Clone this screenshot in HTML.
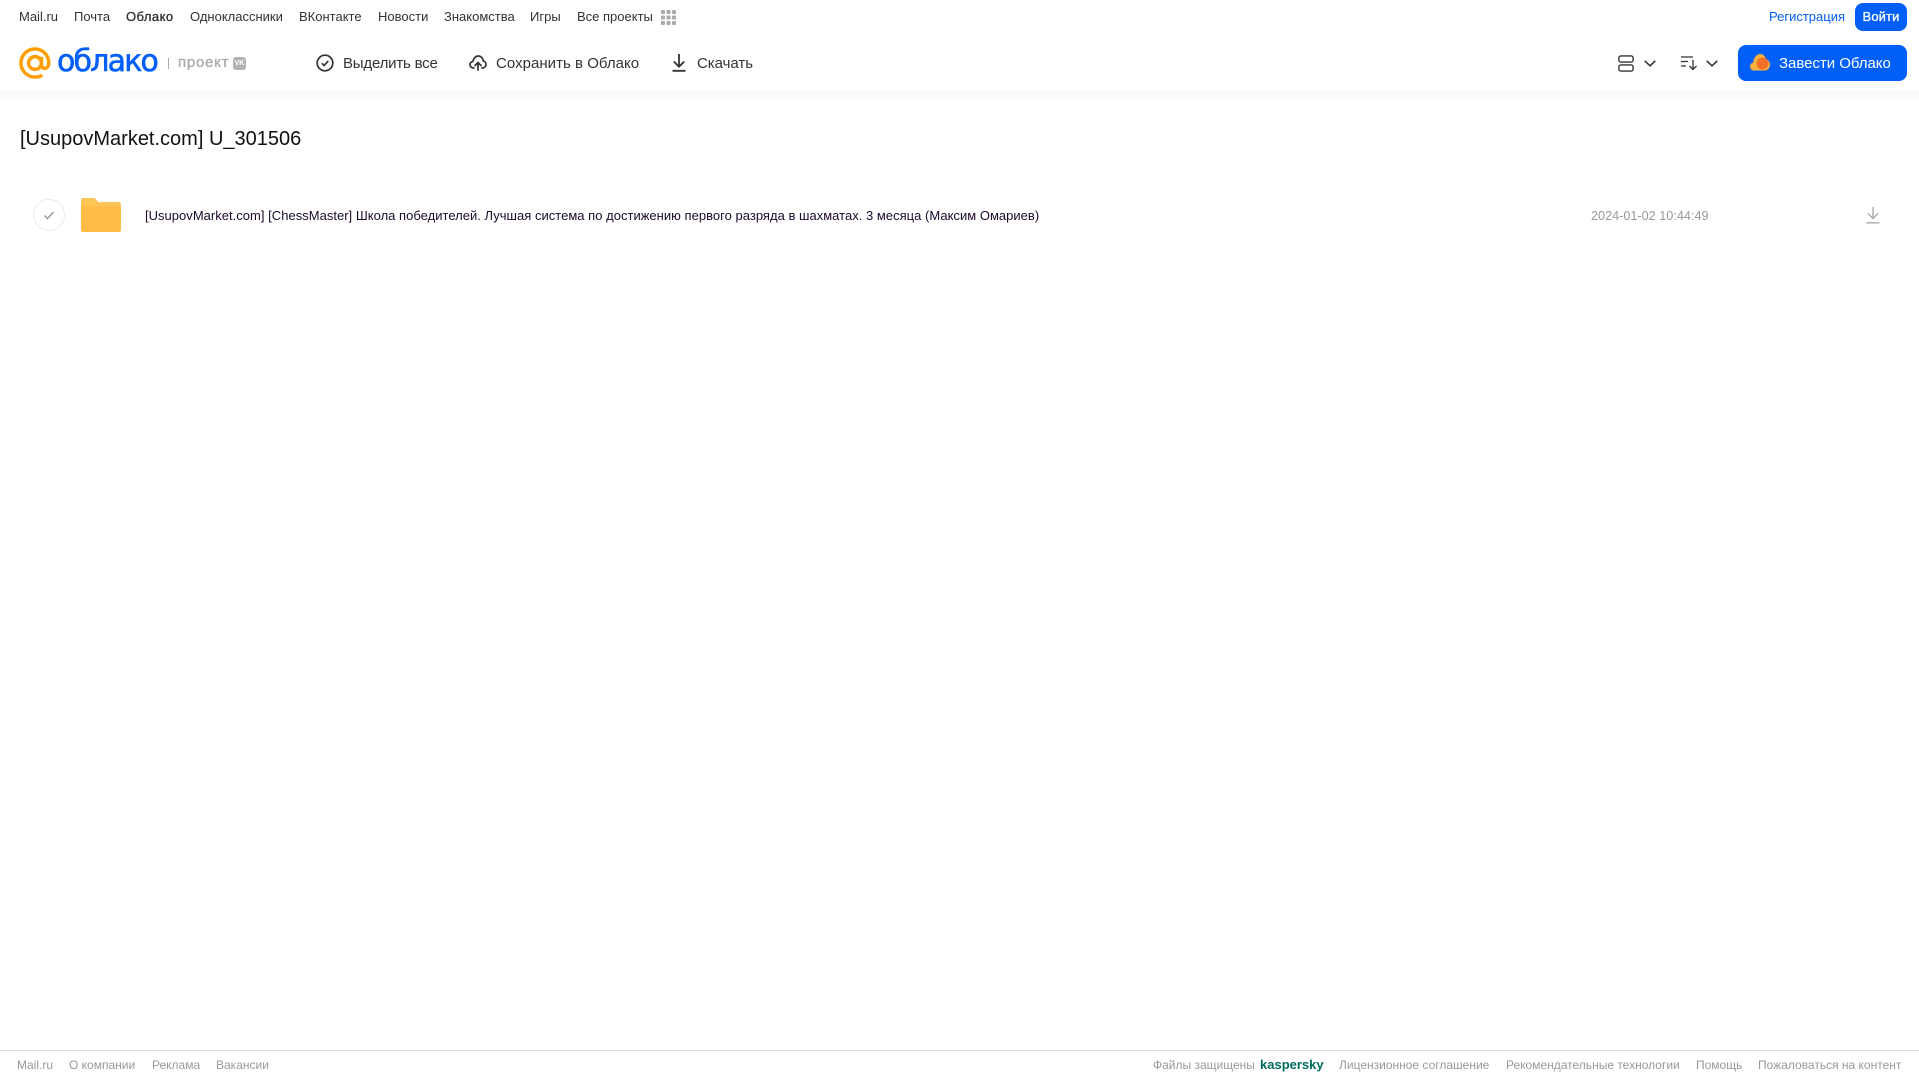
<!DOCTYPE html>
<html lang="ru"><head><meta charset="utf-8"><title>Облако</title>
<style>
html,body{margin:0;padding:0;background:#fff;width:1919px;height:1079px;overflow:hidden}
body{position:relative;font-family:"Liberation Sans",Arial,sans-serif}
.t{position:absolute;white-space:nowrap;line-height:20px;height:20px}
.n{font-size:13px;top:7px;color:#333}
.b{font-size:15px;top:54px;color:#333;letter-spacing:0}
.f{font-size:12px;top:1055px;color:#999}
svg{position:absolute;overflow:visible}
</style></head><body>
<div class="t n" style="left:19px">Mail.ru</div>
<div class="t n" style="left:74px">Почта</div>
<div class="t n" style="left:126px;-webkit-text-stroke:.35px #333;letter-spacing:.45px">Облако</div>
<div class="t n" style="left:190px">Одноклассники</div>
<div class="t n" style="left:299px">ВКонтакте</div>
<div class="t n" style="left:378px">Новости</div>
<div class="t n" style="left:444px">Знакомства</div>
<div class="t n" style="left:530px">Игры</div>
<div class="t n" style="left:577px">Все проекты</div>
<svg style="left:661px;top:10px" width="15" height="15" fill="#aaa"><g id="g"><rect x="0" y="0" width="4" height="4" rx="1"/><rect x="5.5" y="0" width="4" height="4" rx="1"/><rect x="11" y="0" width="4" height="4" rx="1"/><rect x="0" y="5.5" width="4" height="4" rx="1"/><rect x="5.5" y="5.5" width="4" height="4" rx="1"/><rect x="11" y="5.5" width="4" height="4" rx="1"/><rect x="0" y="11" width="4" height="4" rx="1"/><rect x="5.5" y="11" width="4" height="4" rx="1"/><rect x="11" y="11" width="4" height="4" rx="1"/></g></svg>
<div class="t n" style="left:1769px;color:#005ff9">Регистрация</div>
<div style="position:absolute;left:1855px;top:3px;width:52px;height:28px;background:#005ff9;border-radius:8px;color:#fff;font-size:13px;-webkit-text-stroke:.3px #fff;letter-spacing:.1px;line-height:28px;text-align:center">Войти</div>

<div style="position:absolute;left:0;top:91px;width:1919px;height:10px;background:linear-gradient(#f5f5f5,#fff)"></div>

<svg style="left:19px;top:47px" width="32" height="32" viewBox="0 0 33 33" fill="none" stroke="#ff9e00" stroke-width="3.6"><circle cx="16.5" cy="16.5" r="6.6"/><path d="M23.1 10v8.5c0 5 7.6 5 7.6-2C30.700 8 24 2 16.500 2 8.500 2 2 8.500 2 16.500S8.500 31 16.500 31c3 0 5.500-.8 7.500-2"/></svg>
<div class="t" style="left:57px;top:44px;height:36px;line-height:36px;font-size:30px;color:#005ff9;font-family:'DejaVu Sans',sans-serif;letter-spacing:-1.8px;font-weight:500;-webkit-text-stroke:.6px #005ff9">облако</div>
<div style="position:absolute;left:168px;top:58px;width:1px;height:11px;background:#aaa"></div>
<div class="t" style="left:178px;top:53px;font-size:15px;color:#a8a8a8;-webkit-text-stroke:.3px #a8a8a8;letter-spacing:.75px">проект</div>
<div style="position:absolute;left:233px;top:57px;width:13px;height:13px;border-radius:3px;background:#b2b2b2;color:#fff;font-size:7px;font-weight:bold;line-height:13px;text-align:center">VK</div>

<svg style="left:316px;top:54px" width="18" height="18" viewBox="0 0 18 18" fill="none" stroke="#333" stroke-width="1.7"><circle cx="9" cy="9" r="7.8"/><path d="M5.800 9.200l2.300 2.300 4.200-4.600"/></svg>
<div class="t b" style="left:343px;letter-spacing:-.2px">Выделить все</div>
<svg style="left:469px;top:55px" width="18" height="16" viewBox="0 0 18 16" fill="none" stroke="#333" stroke-width="1.7" stroke-linecap="round" stroke-linejoin="round"><path d="M5 13H4.500C2.500 13 1 11.500 1 9.700 1 8 2.300 6.700 3.900 6.500 4.400 3.500 6.500 1 9.300 1c2.800 0 4.800 2.300 5 5 1.600.3 2.700 1.800 2.700 3.500 0 1.900-1.500 3.500-3.500 3.500H13"/><path d="M9 15V7.500M6 10.500l3-3 3 3"/></svg>
<div class="t b" style="left:496px;letter-spacing:.03px">Сохранить в Облако</div>
<svg style="left:671px;top:54px" width="16" height="18" viewBox="0 0 16 18" fill="none" stroke="#333" stroke-width="1.8"><path d="M8 0v12.500M2.800 7.500L8 12.700l5.200-5.200M1.500 16.800h13"/></svg>
<div class="t b" style="left:697px;letter-spacing:-.03px">Скачать</div>

<svg style="left:1618px;top:55px" width="16" height="17" viewBox="0 0 16 17" fill="none" stroke="#333" stroke-width="1.4"><rect x=".9" y=".9" width="14.200" height="6.200" rx="2"/><rect x=".9" y="9.900" width="14.200" height="6.200" rx="2"/></svg>
<svg style="left:1644px;top:60px" width="12" height="7" viewBox="0 0 12 7" fill="none" stroke="#333" stroke-width="1.6"><path d="M.7.800L6 5.800 11.300.800"/></svg>
<svg style="left:1681px;top:56px" width="17" height="15" viewBox="0 0 17 15" fill="none" stroke="#333" stroke-width="1.3"><path d="M0 1h12M0 5.500h7M0 10h5M12 4v9.500M8.500 10l3.500 3.500 3.500-3.500"/></svg>
<svg style="left:1706px;top:60px" width="12" height="7" viewBox="0 0 12 7" fill="none" stroke="#333" stroke-width="1.6"><path d="M.7.800L6 5.800 11.300.800"/></svg>
<div style="position:absolute;left:1738px;top:45px;width:169px;height:36px;background:#005ff9;border-radius:8px"></div>
<svg style="left:1750px;top:54px" width="20" height="17" viewBox="0 0 20 17"><path d="M4 16.500C1.800 16.500 0 14.800 0 12.500c0-2 1.300-3.500 3.200-3.900C3.600 4 6.500 0 10 0c3 0 5.500 2.300 6 5.300 2.300.5 4 2.700 4 5.400 0 3.200-2.500 5.800-5.500 5.800z" fill="#ffb13d"/><circle cx="12.500" cy="9.500" r="6" fill="#f4702a"/></svg>
<div class="t b" style="left:1779px;color:#fff;letter-spacing:-.03px">Завести Облако</div>

<div class="t" style="left:20px;top:127px;height:24px;line-height:24px;font-size:20px;color:#111;letter-spacing:0">[UsupovMarket.com] U_301506</div>

<svg style="left:33px;top:199px" width="32" height="32" viewBox="0 0 32 32" fill="none"><circle cx="16" cy="16" r="15.500" stroke="#ececec"/><path d="M11.500 16.500l3 3 6-6.500" stroke="#999" stroke-width="1.500"/></svg>
<svg style="left:81px;top:198px" width="40" height="34" viewBox="0 0 40 34"><path d="M2 0h10c2 0 3 1 4 2.500L17 4h21c1 0 2 1 2 2v26c0 1-1 2-2 2H2c-1 0-2-1-2-2V2C0 1 1 0 2 0z" fill="#ffc557"/><path d="M0 8h40v24c0 1-1 2-2 2H2c-1 0-2-1-2-2z" fill="#ffbd48"/></svg>
<div class="t" style="left:145px;top:206px;font-size:13px;color:#1c0a2e;letter-spacing:.018px">[UsupovMarket.com] [ChessMaster] Школа победителей. Лучшая система по достижению первого разряда в шахматах. 3 месяца (Максим Омариев)</div>
<div class="t" style="left:1591px;top:206px;font-size:12.660px;color:#999">2024-01-02 10:44:49</div>
<svg style="left:1866px;top:207px" width="14" height="17" viewBox="0 0 14 17" fill="none" stroke="#aaa" stroke-width="1.400"><path d="M7 0v11.500M2 6.500l5 5 5-5M.5 15.800h13"/></svg>

<div style="position:absolute;left:0;top:1050px;width:1919px;height:1px;background:#ddd"></div>
<div class="t f" style="left:17px">Mail.ru</div>
<div class="t f" style="left:69px">О компании</div>
<div class="t f" style="left:152px">Реклама</div>
<div class="t f" style="left:216px">Вакансии</div>
<div class="t f" style="left:1153px">Файлы защищены</div>
<div class="t f" style="left:1260px;color:#006d5c;font-weight:bold;font-size:13px">kaspersky</div>
<div class="t f" style="left:1339px">Лицензионное соглашение</div>
<div class="t f" style="left:1506px">Рекомендательные технологии</div>
<div class="t f" style="left:1696px">Помощь</div>
<div class="t f" style="left:1758px">Пожаловаться на контент</div>
</body></html>
